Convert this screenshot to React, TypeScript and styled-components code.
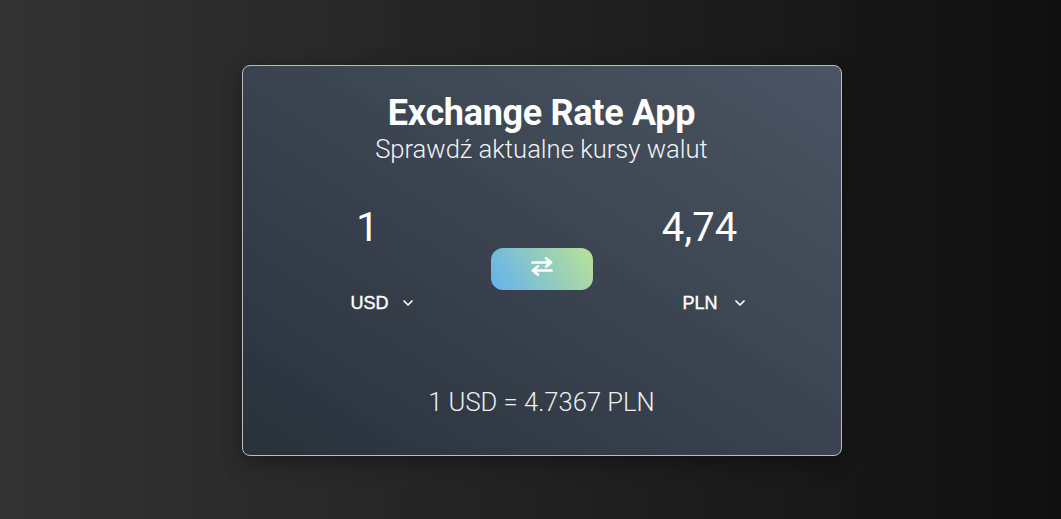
import React from "react";
import styled, { createGlobalStyle } from "styled-components";
import { ChevronDown } from "lucide-react";

const Global = createGlobalStyle`
  html, body { margin: 0; padding: 0; }
  body {
    font-family: Roboto, "Noto Sans", Arial, sans-serif;
    background: linear-gradient(to right, #333333, #101010);
    min-height: 100vh;
  }
`;

const Page = styled.div`
  min-height: 100vh;
  display: flex;
  align-items: center;
  justify-content: center;
  padding: 2px 0 0 22px;
  box-sizing: border-box;
`;

const Card = styled.div`
  width: 600px;
  height: 391px;
  box-sizing: border-box;
  border: 1px solid #b9bdc2;
  border-radius: 8px;
  background: linear-gradient(to top right, #29313b, #4b5563);
  box-shadow: 0 6px 20px rgba(0, 0, 0, 0.35);
  display: flex;
  flex-direction: column;
  align-items: center;
  padding-top: 26px;
  color: #fff;
`;

const Title = styled.h1`
  margin: 0;
  font-size: 36px;
  font-weight: 700;
  line-height: normal;
  letter-spacing: -0.3px;
`;

const LightText = styled.p`
  margin: 0;
  font-family: "Roboto Light", Roboto, "Noto Sans", sans-serif;
  font-size: 25.6px;
  font-weight: 300;
  line-height: normal;
  color: #f1f3f5;
`;

const Subtitle = styled(LightText)`
  margin-top: 0;
`;

const Converter = styled.div`
  margin-top: 40px;
  display: flex;
  align-items: center;
  padding-right: 16px;
`;

const Side = styled.div`
  width: 160px;
  display: flex;
  flex-direction: column;
  align-items: center;
  gap: 42px;
`;

const Amount = styled.div`
  font-size: 40px;
  font-weight: 400;
  line-height: normal;
  text-align: center;
`;

const Select = styled.div`
  width: 65px;
  display: inline-flex;
  align-items: center;
  justify-content: space-between;
  padding-left: 31px;
  font-family: "Liberation Sans", Arial, sans-serif;
  font-size: 18px;
  font-weight: 400;
  -webkit-text-stroke: 0.4px #fff;
  line-height: 20px;
  color: #fff;
`;

const SwapButton = styled.button<{ $ml: number; $mr: number }>`
  width: 102px;
  height: 42px;
  margin: 20px ${(p) => p.$mr}px 0 ${(p) => p.$ml}px;
  padding: 0 0 4px;
  border: none;
  border-radius: 12px;
  background: linear-gradient(60deg, #63b2ee, #b9e297);
  display: flex;
  align-items: center;
  justify-content: center;
  color: #fff;
  cursor: pointer;
`;

const Rate = styled(LightText)`
  margin-top: 74px;
  color: #eef0f2;
`;

function SwapIcon() {
  return (
    <svg width="22" height="19" viewBox="0 0 22 19" fill="none" stroke="currentColor" strokeWidth="2.6" strokeLinecap="round" strokeLinejoin="round">
      <path d="M1.5 5.5H20" />
      <path d="M15 1.3 20 5.5 15 9.7" />
      <path d="M20.5 13.5H2" />
      <path d="M7 9.3 2 13.5 7 17.7" />
    </svg>
  );
}

export default function App() {
  return (
    <>
      <Global />
      <Page>
        <Card>
          <Title>Exchange Rate App</Title>
          <Subtitle>Sprawdź aktualne kursy walut</Subtitle>
          <Converter>
            <Side>
              <Amount>1</Amount>
              <Select>
                USD <ChevronDown size={16} strokeWidth={2.6} />
              </Select>
            </Side>
            <SwapButton $ml={43} $mr={27}>
              <SwapIcon />
            </SwapButton>
            <Side>
              <Amount>4,74</Amount>
              <Select>
                PLN <ChevronDown size={16} strokeWidth={2.6} />
              </Select>
            </Side>
          </Converter>
          <Rate as="div">1 USD = 4.7367 PLN</Rate>
        </Card>
      </Page>
    </>
  );
}
